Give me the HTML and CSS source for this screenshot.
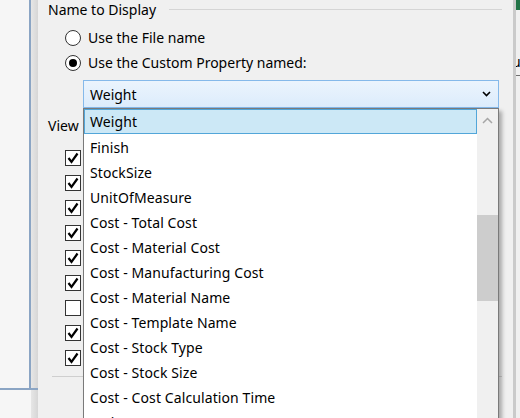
FILE: index.html
```html
<html>

<head>
    <title>Name to Display</title>
    <link rel="stylesheet" href="styles.css">
</head>

<body class="body">
    <div class="screen">
        <div class="desk">
            <div class="frame">
                <div class="framePane"></div>
            </div>
        </div>

        <div class="dialog">
            <div class="groupHead">
                <span>Name to Display</span>
                <div class="groupRule"></div>
            </div>

            <div class="options">
                <div class="opt"><span class="radio"></span>Use the File name</div>
                <div class="opt"><span class="radio radioOn"></span>Use the Custom Property named:</div>
            </div>

            <div class="combo">
                <span>Weight</span>
                <svg class="comboArrow" width="9" height="6" viewBox="0 0 9 6">
                    <polyline points="1,1 4.5,4.5 8,1" fill="none" stroke="#000" stroke-width="1.6" />
                </svg>
            </div>

            <div class="viewLabel">View</div>

            <div class="checks">
                <div class="checkRow"><span class="box"><svg width="14" height="14" viewBox="0 0 14 14"><polyline points="2.5,7 5.5,11 11.5,2.5" fill="none" stroke="#000" stroke-width="2.2" /></svg></span></div>
                <div class="checkRow"><span class="box"><svg width="14" height="14" viewBox="0 0 14 14"><polyline points="2.5,7 5.5,11 11.5,2.5" fill="none" stroke="#000" stroke-width="2.2" /></svg></span></div>
                <div class="checkRow"><span class="box"><svg width="14" height="14" viewBox="0 0 14 14"><polyline points="2.5,7 5.5,11 11.5,2.5" fill="none" stroke="#000" stroke-width="2.2" /></svg></span></div>
                <div class="checkRow"><span class="box"><svg width="14" height="14" viewBox="0 0 14 14"><polyline points="2.5,7 5.5,11 11.5,2.5" fill="none" stroke="#000" stroke-width="2.2" /></svg></span></div>
                <div class="checkRow"><span class="box"><svg width="14" height="14" viewBox="0 0 14 14"><polyline points="2.5,7 5.5,11 11.5,2.5" fill="none" stroke="#000" stroke-width="2.2" /></svg></span></div>
                <div class="checkRow"><span class="box"><svg width="14" height="14" viewBox="0 0 14 14"><polyline points="2.5,7 5.5,11 11.5,2.5" fill="none" stroke="#000" stroke-width="2.2" /></svg></span></div>
                <div class="checkRow"><span class="box"></span></div>
                <div class="checkRow"><span class="box"><svg width="14" height="14" viewBox="0 0 14 14"><polyline points="2.5,7 5.5,11 11.5,2.5" fill="none" stroke="#000" stroke-width="2.2" /></svg></span></div>
                <div class="checkRow"><span class="box"><svg width="14" height="14" viewBox="0 0 14 14"><polyline points="2.5,7 5.5,11 11.5,2.5" fill="none" stroke="#000" stroke-width="2.2" /></svg></span></div>
            </div>

            <div class="sep"></div>

            <!-- open drop-down of the combo, lies over the check boxes -->
            <div class="dropList">
                <div class="items">
                    <div class="item itemSel">Weight</div>
                    <div class="item">Finish</div>
                    <div class="item">StockSize</div>
                    <div class="item">UnitOfMeasure</div>
                    <div class="item">Cost - Total Cost</div>
                    <div class="item">Cost - Material Cost</div>
                    <div class="item">Cost - Manufacturing Cost</div>
                    <div class="item">Cost - Material Name</div>
                    <div class="item">Cost - Template Name</div>
                    <div class="item">Cost - Stock Type</div>
                    <div class="item">Cost - Stock Size</div>
                    <div class="item">Cost - Cost Calculation Time</div>
                    <div class="item">Make-Or-Buy</div>
                </div>
                <div class="scrollBar">
                    <div class="scrollUp">
                        <svg width="11" height="7" viewBox="0 0 11 7">
                            <polyline points="1,6 5.5,1.5 10,6" fill="none" stroke="#a6a6a6" stroke-width="1.5" />
                        </svg>
                    </div>
                    <div class="scrollThumb"></div>
                </div>
            </div>
        </div>

        <div class="side">
            <div class="sideTitle"></div>
            <div class="sideText">ul</div>
            <div class="sideRule"></div>
        </div>
    </div>
</body>

</html>
```

FILE: styles.css
```css
.body {
    margin: 0;
    width: 520px;
    height: 418px;
    overflow: hidden;
    font-family: "Noto Sans", "Open Sans", sans-serif;
    font-size: 14px;
    color: #000;
}

.screen {
    display: flex;
    width: 520px;
    height: 418px;
    overflow: hidden;
}

.desk {
    width: 38px;
    flex-shrink: 0;
    background: linear-gradient(to right, #f6f6f6 31px, #e6e6e6 31px, #d6d6d6 38px);
}

.frame {
    width: 38px;
    height: 388px;
    border-bottom: 2px solid #8ba5c4;
}

.framePane {
    width: 29px;
    height: 388px;
    border-right: 2px solid #8ba5c4;
    background-color: #f6f6f6;
}

.dialog {
    position: relative;
    width: 475px;
    flex-shrink: 0;
    background-color: #f0f0f0;
}

.groupHead {
    display: flex;
    align-items: center;
    height: 18px;
    padding-left: 10px;
    padding-right: 11px;
}

.groupRule {
    flex: 1;
    height: 1px;
    margin-left: 13px;
    background-color: #d5d5d5;
}

.options {
    padding-top: 7px;
    padding-left: 27px;
}

.opt {
    display: flex;
    align-items: center;
    height: 25px;
}

.radio {
    width: 14px;
    height: 14px;
    margin-right: 7px;
    border: 1px solid #333;
    border-radius: 50%;
    background-color: #fff;
    display: flex;
    align-items: center;
    justify-content: center;
}

.radioOn::after {
    content: "";
    width: 8px;
    height: 8px;
    border-radius: 50%;
    background-color: #000;
}

.combo {
    display: flex;
    align-items: center;
    justify-content: space-between;
    box-sizing: border-box;
    width: 416px;
    height: 28px;
    margin-top: 5px;
    margin-left: 45px;
    padding-left: 6px;
    padding-right: 7px;
    border: 1px solid #85b9ea;
    background: linear-gradient(#ebf4fd, #dcecfc);
}

.viewLabel {
    height: 20px;
    line-height: 20px;
    margin-top: 8px;
    padding-left: 10px;
}

.checks {
    margin-top: 9px;
    padding-left: 27px;
}

.checkRow {
    display: flex;
    align-items: center;
    height: 25px;
}

.box {
    width: 14px;
    height: 14px;
    border: 1px solid #333;
    background-color: #fff;
    display: flex;
    align-items: center;
    justify-content: center;
}

.sep {
    height: 1px;
    margin-top: 6px;
    margin-left: 14px;
    margin-right: 11px;
    background-color: #cfcfcf;
}

.dropList {
    position: absolute;
    left: 45px;
    top: 108px;
    width: 416px;
    height: 330px;
    box-sizing: border-box;
    display: flex;
    border: 1px solid #7a7a7a;
    background-color: #fff;
    box-shadow: 3px 3px 4px rgba(0, 0, 0, 0.3);
}

.items {
    flex: 1;
}

.item {
    height: 25px;
    line-height: 23px;
    box-sizing: border-box;
    padding-top: 1px;
    padding-left: 5px;
    border: 1px solid transparent;
    white-space: nowrap;
    letter-spacing: 0.1px;
}

.itemSel {
    padding-top: 0;
    background-color: #cce8f6;
    border-color: #52a6d9;
}

.scrollBar {
    width: 21px;
    background-color: #f0f0f0;
}

.scrollUp {
    height: 22px;
    display: flex;
    align-items: center;
    justify-content: center;
}

.scrollThumb {
    height: 86px;
    margin-top: 84px;
    background-color: #cdcdcd;
}

.side {
    width: 4px;
    flex-shrink: 0;
    border-left: 3px solid #cacaca;
    background-color: #f0f0f0;
    overflow: hidden;
}

.sideTitle {
    height: 10px;
    background-color: #217346;
}

.sideText {
    height: 20px;
    margin-top: 42px;
    margin-left: -4px;
    line-height: 20px;
    white-space: nowrap;
}

.sideRule {
    height: 1px;
    margin-top: 3px;
    background-color: #6f6f6f;
}
```
